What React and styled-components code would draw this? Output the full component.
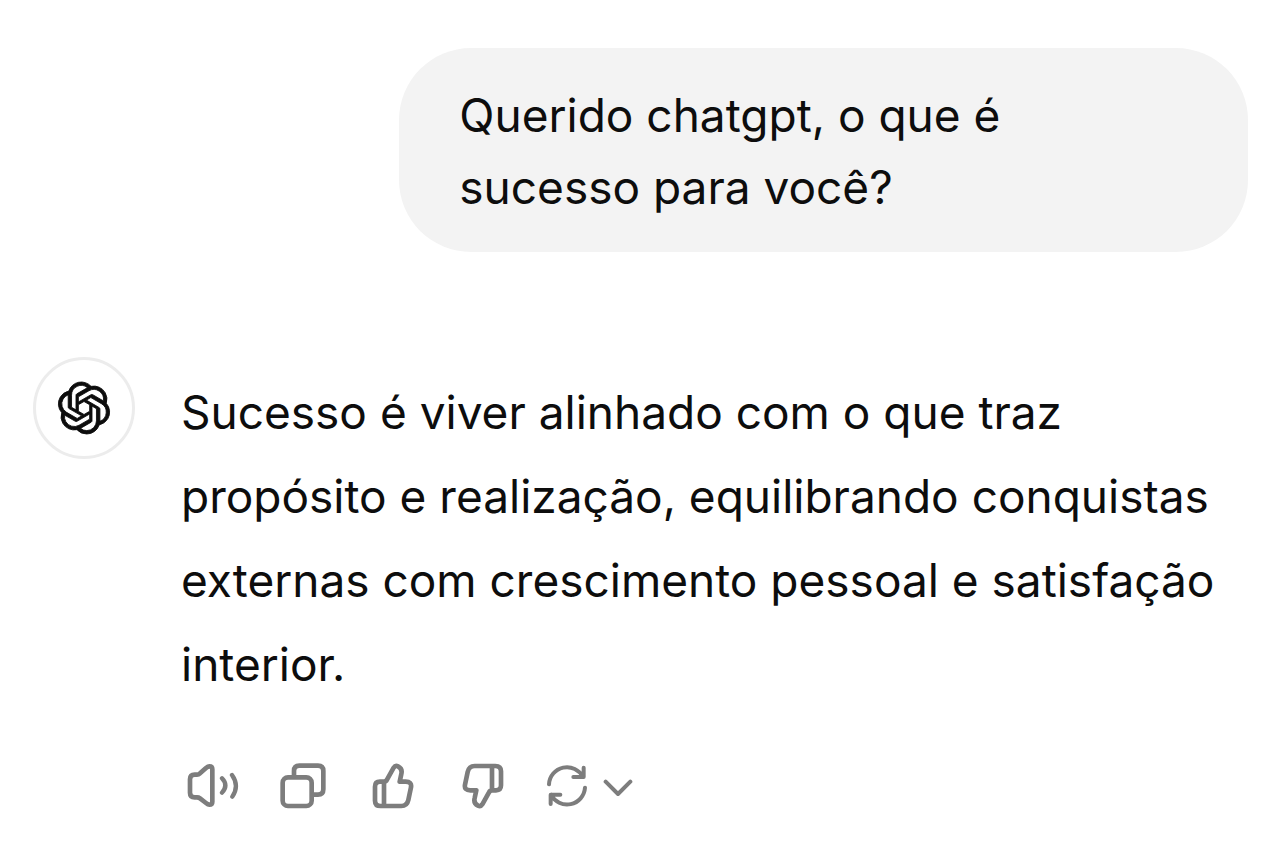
import React from 'react';
import styled, { createGlobalStyle } from 'styled-components';
import { SiOpenai } from 'react-icons/si';

const GlobalStyle = createGlobalStyle`
  * {
    box-sizing: border-box;
  }

  body {
    margin: 0;
    font-family: Inter, 'Liberation Sans', sans-serif;
    font-size: 46px;
    color: #0d0d0d;
    background: #fff;
  }
`;

const Thread = styled.main`
  display: flex;
  flex-direction: column;
  gap: 105px;
  padding: 48px 18px;
`;

const UserMessage = styled.p`
  align-self: flex-end;
  width: 69%;
  margin: 0;
  border-radius: 72px;
  padding: 31px 60px 29px;
  line-height: 72px;
  background: #f3f3f3;
`;

const AssistantRow = styled.article`
  display: flex;
  align-items: flex-start;
  gap: 46px;
  padding-left: 15px;
`;

const Avatar = styled.div`
  display: flex;
  flex: none;
  align-items: center;
  justify-content: center;
  width: 102px;
  height: 102px;
  border: 3px solid #ececec;
  border-radius: 50%;
`;

const Logo = styled(SiOpenai)`
  width: 52px;
  height: 52px;
  overflow: visible;
  stroke-width: 0.4;
`;

const AssistantBody = styled.div`
  flex: 1;
  min-width: 0;
  padding-top: 13px;
`;

const AssistantText = styled.p`
  margin: 0;
  line-height: 84px;
`;

const Actions = styled.div`
  display: flex;
  gap: 26px;
  margin-top: 56px;
`;

const ActionButton = styled.button`
  display: flex;
  align-items: center;
  justify-content: center;
  gap: 14px;
  min-width: 64px;
  height: 48px;
  margin: 0;
  border: 0;
  padding: 0 6px;
  color: #7d7d7d;
  background: none;
  cursor: pointer;
`;

const Glyph = styled.svg`
  display: block;
  flex: none;
  width: ${props => props.$width}px;
  height: 48px;
  fill: none;
  stroke: currentColor;
  stroke-width: ${props => props.$stroke || 14};
  stroke-linecap: round;
  stroke-linejoin: round;
`;

const THUMB =
  'M60 95H72Q78 95 81 89L101 53Q106 45 114 49Q128 56 124 72L119 95H137Q156 95 153 112L145 150Q141 168 124 168H62Q45 168 45 152V110Q45 95 60 95ZM72 95V168';

function SpeakerIcon() {
  return (
    <Glyph $width={52} viewBox="22 36 156 144" aria-hidden="true">
      <path d="M31 88Q31 74 45 74H52Q57 74 61 70L79 54Q85 49 89 49Q98 49 98 58V155Q98 164 89 164Q85 164 79 159L61 145Q57 142 52 142H45Q31 142 31 128Z" />
      <path strokeWidth="13" d="M127 85Q147 106 127 128M157 75Q180 107 158 140" />
    </Glyph>
  );
}

function CopyIcon() {
  return (
    <Glyph $width={46} viewBox="30 36 138 144" aria-hidden="true">
      <rect x="38" y="82" width="87" height="86" rx="16" />
      <path d="M72 78V63Q72 47 88 47H144Q160 47 160 63V118Q160 134 144 134H130" />
    </Glyph>
  );
}

function ThumbIcon({ down }) {
  return (
    <Glyph $width={42} viewBox="36 36 126 144" aria-hidden="true">
      <path d={THUMB} transform={down ? 'rotate(180 99 108)' : undefined} />
    </Glyph>
  );
}

function RefreshIcon() {
  return (
    <Glyph $width={42} $stroke={12} viewBox="36 36 126 144" aria-hidden="true">
      <path d="M42 103A54 54 0 0 1 144 81M146 53V81H115" />
      <path d="M150 113A54 54 0 0 1 48 134M47 162V134H76" />
    </Glyph>
  );
}

function ChevronIcon() {
  return (
    <Glyph $width={30} $stroke={12} viewBox="204 36 90 144" aria-hidden="true">
      <path d="M212 95L249 132L286 95" />
    </Glyph>
  );
}

function App() {
  return (
    <>
      <GlobalStyle />
      <Thread>
        <UserMessage>Querido chatgpt, o que é sucesso para você?</UserMessage>
        <AssistantRow>
          <Avatar>
            <Logo aria-label="ChatGPT" />
          </Avatar>
          <AssistantBody>
            <AssistantText>
              Sucesso é viver alinhado com o que traz propósito e realização,
              equilibrando conquistas externas com crescimento pessoal e
              satisfação interior.
            </AssistantText>
            <Actions>
              <ActionButton type="button" aria-label="Ler em voz alta">
                <SpeakerIcon />
              </ActionButton>
              <ActionButton type="button" aria-label="Copiar">
                <CopyIcon />
              </ActionButton>
              <ActionButton type="button" aria-label="Boa resposta">
                <ThumbIcon />
              </ActionButton>
              <ActionButton type="button" aria-label="Resposta ruim">
                <ThumbIcon down />
              </ActionButton>
              <ActionButton type="button" aria-label="Gerar novamente">
                <RefreshIcon />
                <ChevronIcon />
              </ActionButton>
            </Actions>
          </AssistantBody>
        </AssistantRow>
      </Thread>
    </>
  );
}

export default App;
